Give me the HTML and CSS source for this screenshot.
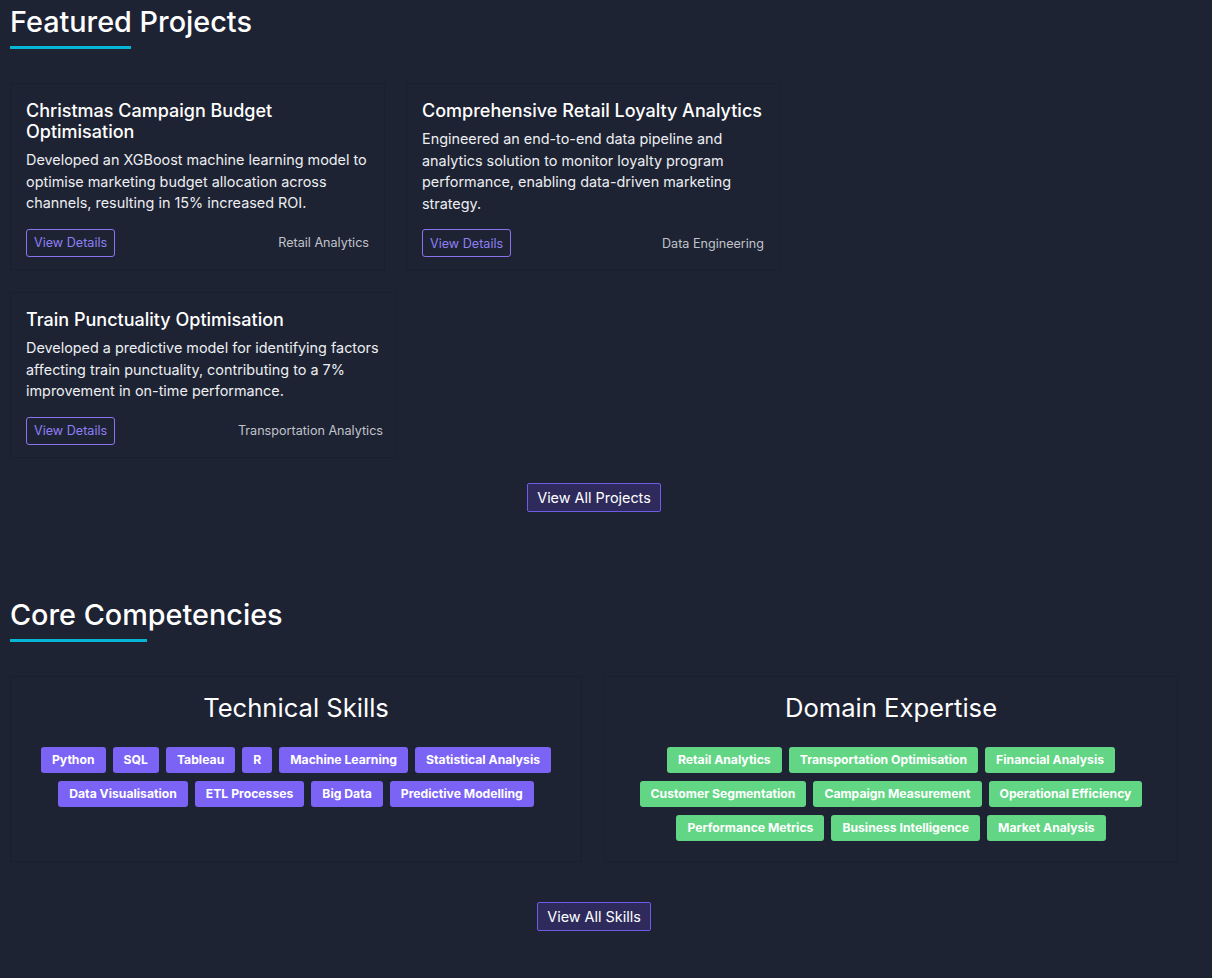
FILE: index.html
```html
<!DOCTYPE html>
<html lang="en">
<head>
<meta charset="utf-8">
<title>Portfolio</title>
<link rel="stylesheet" href="styles.css">
</head>
<body>
<main class="page">
  <section class="section projects">
    <h2 class="section-title">Featured Projects</h2>
    <div class="project-list">
      <article class="card card-a">
        <h3 class="card-title">Christmas Campaign Budget Optimisation</h3>
        <p class="card-text">Developed an XGBoost machine learning model to optimise marketing budget allocation across channels, resulting in 15% increased ROI.</p>
        <div class="card-foot">
          <a class="btn-outline" href="#">View Details</a>
          <span class="card-cat">Retail Analytics</span>
        </div>
      </article>
      <article class="card card-b">
        <h3 class="card-title">Comprehensive Retail Loyalty Analytics</h3>
        <p class="card-text">Engineered an end-to-end data pipeline and analytics solution to monitor loyalty program performance, enabling data-driven marketing strategy.</p>
        <div class="card-foot">
          <a class="btn-outline" href="#">View Details</a>
          <span class="card-cat">Data Engineering</span>
        </div>
      </article>
      <article class="card card-c">
        <h3 class="card-title">Train Punctuality Optimisation</h3>
        <p class="card-text">Developed a predictive model for identifying factors affecting train punctuality, contributing to a 7% improvement in on-time performance.</p>
        <div class="card-foot">
          <a class="btn-outline" href="#">View Details</a>
          <span class="card-cat">Transportation Analytics</span>
        </div>
      </article>
    </div>
    <div class="center-row projects-more">
      <a class="btn-solid" href="#">View All Projects</a>
    </div>
  </section>

  <section class="section skills">
    <h2 class="section-title title-wide">Core Competencies</h2>
    <div class="skill-grid">
      <div class="skill-box">
        <h3 class="skill-heading">Technical Skills</h3>
        <div class="tags">
          <span class="tag tag-purple">Python</span>
          <span class="tag tag-purple">SQL</span>
          <span class="tag tag-purple">Tableau</span>
          <span class="tag tag-purple">R</span>
          <span class="tag tag-purple">Machine Learning</span>
          <span class="tag tag-purple">Statistical Analysis</span>
          <span class="tag tag-purple">Data Visualisation</span>
          <span class="tag tag-purple">ETL Processes</span>
          <span class="tag tag-purple">Big Data</span>
          <span class="tag tag-purple">Predictive Modelling</span>
        </div>
      </div>
      <div class="skill-box">
        <h3 class="skill-heading">Domain Expertise</h3>
        <div class="tags">
          <span class="tag tag-green">Retail Analytics</span>
          <span class="tag tag-green">Transportation Optimisation</span>
          <span class="tag tag-green">Financial Analysis</span>
          <span class="tag tag-green">Customer Segmentation</span>
          <span class="tag tag-green">Campaign Measurement</span>
          <span class="tag tag-green">Operational Efficiency</span>
          <span class="tag tag-green">Performance Metrics</span>
          <span class="tag tag-green">Business Intelligence</span>
          <span class="tag tag-green">Market Analysis</span>
        </div>
      </div>
    </div>
    <div class="center-row skills-more">
      <a class="btn-solid" href="#">View All Skills</a>
    </div>
  </section>
</main>
</body>
</html>
```

FILE: styles.css
```css
* { box-sizing: border-box; }

html, body {
  margin: 0;
  padding: 0;
  background: #1e2333;
}

body {
  font-family: Inter, "Noto Sans", "Liberation Sans", sans-serif;
  color: #f4f5f8;
}

.page {
  width: 1178px;
  padding-left: 10px;
}

.section-title {
  margin: 0;
  padding-top: 4px;
  font-size: 28.8px;
  font-weight: 500;
  line-height: 36px;
  color: #ffffff;
  display: inline-block;
}

.section-title::after {
  content: "";
  display: block;
  width: 121px;
  height: 3px;
  margin-top: 6px;
  background: #06b6d4;
}

.title-wide::after {
  width: 137px;
}

.project-list {
  display: flex;
  flex-wrap: wrap;
  column-gap: 21px;
  row-gap: 22px;
  margin-top: 34px;
}

.card {
  border: 1px solid #1a1f2d;
  background: #1e2333;
  padding: 16px 15px 12px;
  display: flex;
  flex-direction: column;
}

.card-a { width: 375px; }
.card-b { width: 374px; }
.card-c { width: 386px; }

.card-title {
  margin: 0 0 7px;
  font-size: 18px;
  font-weight: 500;
  line-height: 21px;
  color: #ffffff;
}

.card-text {
  margin: 0;
  font-size: 14.4px;
  line-height: 21.5px;
  color: #eceef2;
}

.card-foot {
  display: flex;
  justify-content: space-between;
  align-items: center;
  margin-top: 15px;
}

.btn-outline {
  display: inline-flex;
  align-items: center;
  height: 28px;
  padding: 0 7px;
  border: 1px solid #8b73f0;
  border-radius: 3px;
  font-size: 12.6px;
  color: #8f7ff5;
  text-decoration: none;
}

.card-cat {
  font-size: 12.6px;
  color: #c0c3cb;
}

.card-c .card-cat {
  margin-right: -3px;
}

.center-row {
  display: flex;
  justify-content: center;
}

.projects-more {
  margin-top: 25px;
}

.btn-solid {
  display: inline-flex;
  align-items: center;
  height: 29px;
  padding: 0 9px;
  background: #2e2b5c;
  border: 1px solid #6d5ce6;
  border-radius: 2px;
  font-size: 14.4px;
  color: #ffffff;
  text-decoration: none;
}

.skills {
  margin-top: 81px;
}

.skill-grid {
  display: grid;
  grid-template-columns: 572px 574px;
  column-gap: 22px;
  margin-top: 34px;
}

.skill-box {
  border: 1px solid #1a1f2d;
  padding: 16px 20px 20px;
  min-height: 183px;
}

.skill-heading {
  margin: 0 0 24px;
  text-align: center;
  font-size: 25.6px;
  font-weight: 400;
  line-height: 30px;
  color: #ffffff;
}

.tags {
  display: flex;
  flex-wrap: wrap;
  justify-content: center;
  gap: 8px 7px;
}

.tag {
  display: inline-flex;
  align-items: center;
  height: 26px;
  padding: 0 11px;
  border-radius: 3px;
  font-size: 12.2px;
  font-weight: 700;
  color: #ffffff;
}

.tag-purple { background: #7b63f5; }
.tag-green { background: #62d685; }

.skills-more {
  margin-top: 40px;
}
```
